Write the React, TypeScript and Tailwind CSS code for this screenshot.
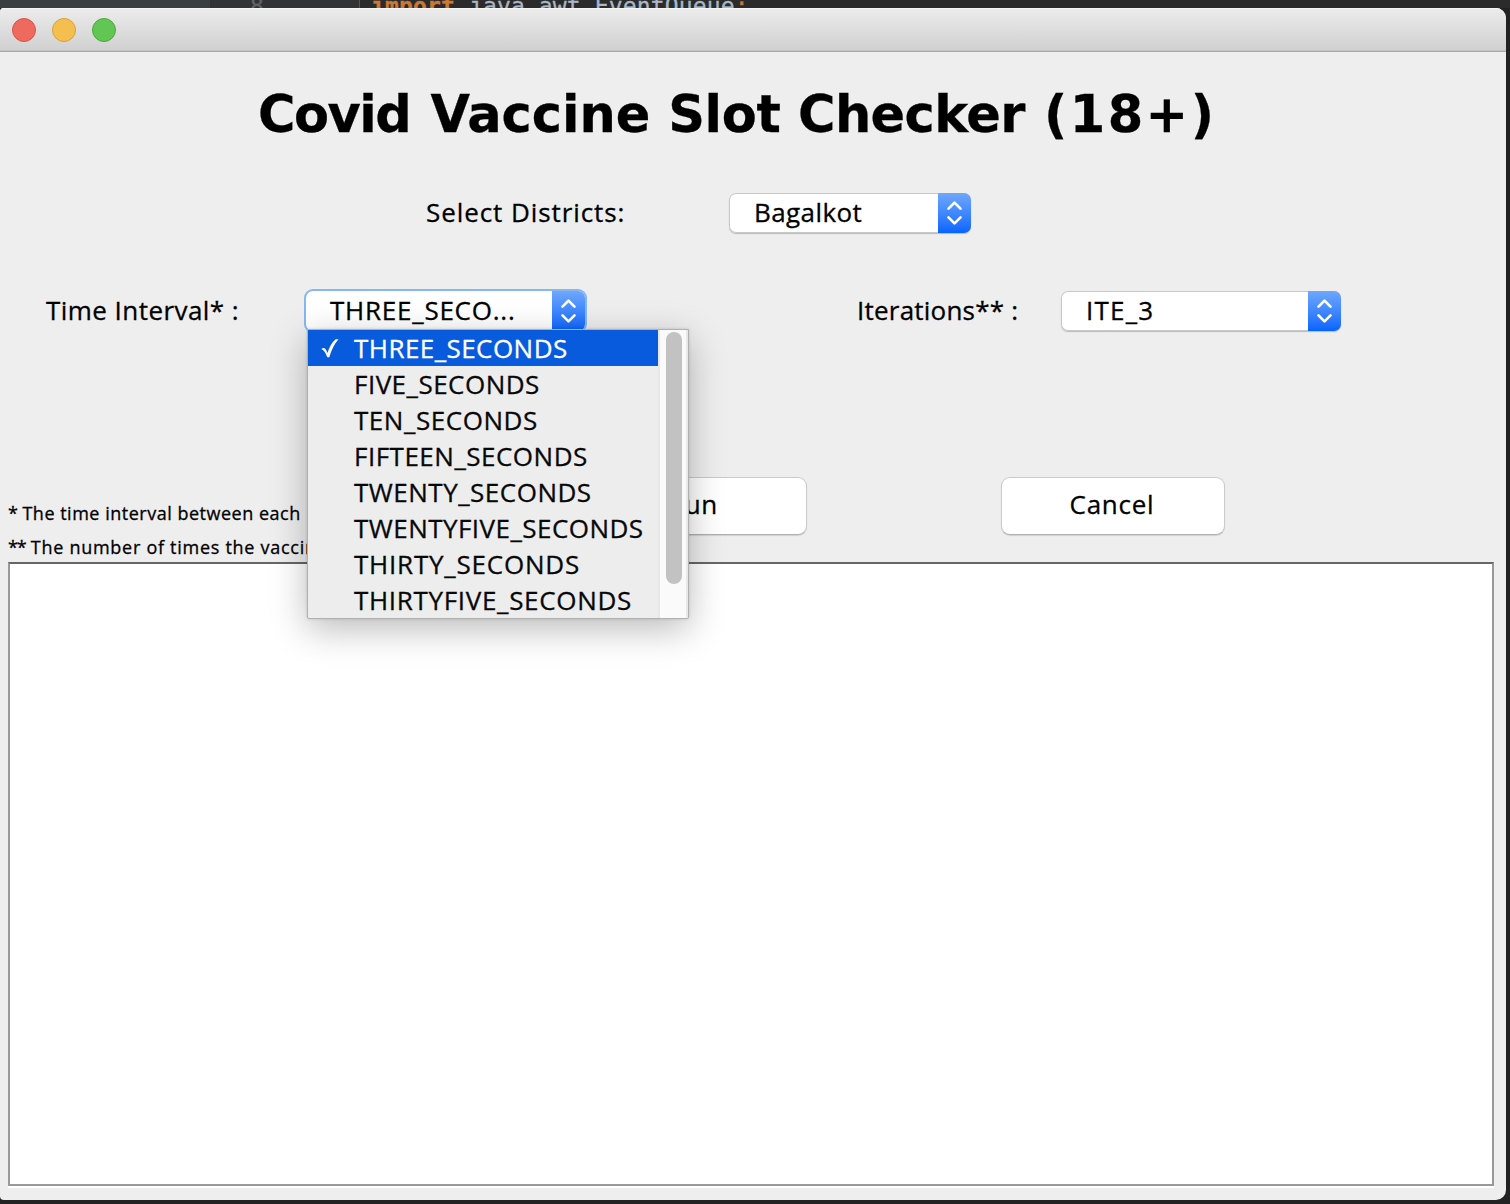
const OPTIONS = [
  { label: "THREE_SECONDS", tracking: "tracking-[0.45px]" },
  { label: "FIVE_SECONDS", tracking: "tracking-[0.48px]" },
  { label: "TEN_SECONDS", tracking: "tracking-[0.55px]" },
  { label: "FIFTEEN_SECONDS", tracking: "tracking-[0.5px]" },
  { label: "TWENTY_SECONDS", tracking: "tracking-[0.5px]" },
  { label: "TWENTYFIVE_SECONDS", tracking: "tracking-[0.46px]" },
  { label: "THIRTY_SECONDS", tracking: "tracking-[0.78px]" },
  { label: "THIRTYFIVE_SECONDS", tracking: "tracking-[0.68px]" },
];

function Stepper() {
  return (
    <span className="flex w-[33px] shrink-0 items-center justify-center self-stretch rounded-r-[7px] bg-linear-to-b from-[#6ea7fc] to-[#0364ff]">
      <svg width="19" height="26" viewBox="0 0 19 26" fill="none" stroke="white" strokeWidth="2.7" strokeLinecap="round" strokeLinejoin="round">
        <path d="M3.5 8.600 9.500 2.600l6 6M3.500 17.400l6 6 6-6" />
      </svg>
    </span>
  );
}

function Combo({ value, className, focused = false }: { value: string; className: string; focused?: boolean }) {
  return (
    <div
      className={
        "flex h-10 items-center rounded-[7px] bg-white " +
        (focused
          ? "shadow-[0_0_0_2px_#85b7f0] "
          : "shadow-[inset_0_0_0_1px_#c8c8c8,0_1px_1px_rgba(0,0,0,0.22)] ") +
        className
      }
    >
      <span className="flex-1 pb-0.5 leading-9">{value}</span>
      <Stepper />
    </div>
  );
}

function PushButton({ label, className }: { label: string; className: string }) {
  return (
    <button
      className={
        "flex h-[58px] w-[224px] items-center justify-center rounded-[9px] border border-[#cacaca] border-b-[#b0b0b0] bg-white pb-1 leading-9 shadow-[0_1px_1px_rgba(0,0,0,0.13)] " +
        className
      }
    >
      {label}
    </button>
  );
}

function Popup() {
  return (
    <div className="absolute top-[38px] left-px z-10 flex h-[290px] w-[382px] rounded-b-[2px] border border-[#b0b0b0] bg-[#ededed] shadow-[0_10px_36px_rgba(0,0,0,0.27),0_0_3px_rgba(0,0,0,0.15)]">
      <ul className="w-[350px]">
        {OPTIONS.map((o, i) => (
          <li
            key={o.label}
            className={"flex h-9 items-center leading-9 " + o.tracking + (i === 0 ? " bg-[#085bdc] text-white" : " text-[#080808]")}
          >
            <span className="flex w-[46px] shrink-0 pl-3">
              {i === 0 && (
                <svg width="19" height="20" viewBox="0 0 19 20" fill="currentColor">
                  <path d="M1.300 11Q3.400 9.300 5 10.600 6.500 12.300 7.500 15 10.500 5.500 15.700 1.300H18.500Q12.500 8 9.300 19.300H7.300Q4.800 12.500 1.300 11Z" />
                </svg>
              )}
            </span>
            {o.label}
          </li>
        ))}
      </ul>
      <div className="flex flex-1 justify-center border-x-2 border-[#e8e8e8] bg-[#fafafa] pt-0.5 pl-0.5">
        <div className="h-[252px] w-4 rounded-full bg-[#c2c2c2]" />
      </div>
    </div>
  );
}

export default function App() {
  return (
    <div className="h-[1204px] w-[1510px] overflow-hidden bg-[#222222] font-['Open_Sans',sans-serif] text-[26px] text-black [-webkit-text-stroke-width:0.3px]">
      <div className="flex h-2 overflow-hidden font-['DejaVu_Sans_Mono',monospace] text-[23px] leading-[8px] tracking-[0.14px] whitespace-pre">
        <div className="w-[210px] bg-[#3a3f42]" />
        <div className="w-[150px] border-r border-[#555555] bg-[#313335] pl-[40px] text-[#606366]">
          <span className="relative top-0.5">8</span>
        </div>
        <div className="flex-1 bg-[#2b2b2b] pl-[11px] text-[#a9b7c6]">
          <span className="relative top-0.5">
            <span className="font-bold text-[#cc7832]">import</span> java.awt.EventQueue<span className="text-[#cc7832]">;</span>
          </span>
        </div>
      </div>

      <div className="flex h-[1192px] w-[1506px] flex-col overflow-hidden rounded-tl-[4px] rounded-tr-[10px] rounded-br-[10px] rounded-bl-[4px] bg-[#eeeeee]">
        <header className="flex h-11 shrink-0 items-center gap-4 border-b border-[#a8a8a8] bg-linear-to-b from-[#ececec] to-[#d0d0d0] pl-3 shadow-[inset_0_1px_0_#f6f6f6,inset_0_-1px_0_#c4c4c4]">
          <span className="size-6 rounded-full border border-[#d9544a] bg-[#ee6a5f]" />
          <span className="size-6 rounded-full border border-[#d9a03c] bg-[#f5bf4f]" />
          <span className="size-6 rounded-full border border-[#4fa73d] bg-[#62c655]" />
        </header>

        <h1 className="h-[124px] shrink-0 pl-[258px] font-['DejaVu_Sans',sans-serif] text-[51px] leading-[126px] font-bold whitespace-nowrap [-webkit-text-stroke-width:0.3px]">
          <span className="tracking-[-1.5px]">Covid</span>
          <span className="tracking-[2.5px]"> </span>
          <span>Vaccine </span>
          <span className="tracking-[-0.3px]">Slot </span>
          <span className="tracking-[-0.6px]">Checker</span>
          <span className="tracking-[1.6px]"> </span>
          <span className="tracking-[2.4px]">(18+)</span>
        </h1>

        <section className="flex h-[74px] shrink-0 items-center leading-9">
          <span className="ml-[426px] w-[303px] pb-0.5 tracking-[0.92px]">Select Districts:</span>
          <Combo value="Bagalkot" className="w-[242px] pl-[25px] tracking-[0.42px]" />
        </section>

        <section className="mt-[41px] flex h-10 shrink-0 items-center leading-9">
          <span className="ml-[46px] w-[260px] pb-0.5 tracking-[0.45px]">Time Interval* :</span>
          <div className="relative">
            <Combo value="THREE_SECO..." focused className="w-[279px] pl-6 tracking-[0.76px]" />
            <Popup />
          </div>
          <span className="ml-[272px] w-[204px] pb-0.5 tracking-[0.22px]">Iterations** :</span>
          <Combo value="ITE_3" className="w-[280px] pl-[25px] tracking-[1.2px]" />
        </section>

        <section className="mt-[146px] flex h-[85px] shrink-0">
          <div className="ml-2 w-[575px] overflow-hidden pt-[19px] text-[18px] leading-[34px] whitespace-nowrap">
            <p className="tracking-[0.51px]">
              <span className="tracking-[-0.7px]">*</span> The time interval between each
            </p>
            <p className="tracking-[0.72px]">
              <span className="tracking-[-1.2px]">**</span> The number of times the vaccine
            </p>
          </div>
          <PushButton label="Run" className="pr-1 tracking-[0.7px]" />
          <PushButton label="Cancel" className="ml-[194px] pr-0.5 tracking-[0.75px]" />
        </section>

        <div className="ml-2 h-[626px] w-[1486px] shrink-0 bg-white pb-0.5">
          <div className="h-full border-2 border-[#999999] border-t-[#666666] bg-white" />
        </div>
      </div>
    </div>
  );
}
